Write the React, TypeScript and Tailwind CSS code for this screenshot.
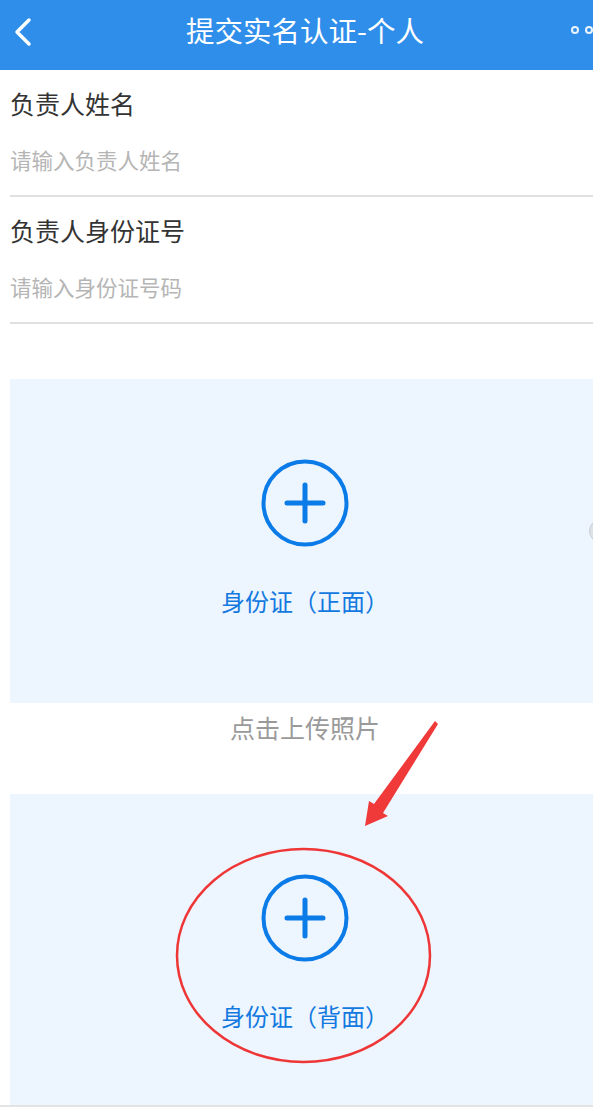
import React from "react";

const FONT = { fontFamily: '"Noto Sans CJK SC", "Noto Sans", sans-serif' };

function PlusCircle() {
  return (
    <svg width="92" height="92" viewBox="0 0 92 92" fill="none">
      <circle cx="46" cy="46" r="41.5" stroke="#0b7be8" strokeWidth="4" />
      <path d="M28 46h36M46 28v36" stroke="#0b7be8" strokeWidth="5" strokeLinecap="round" />
    </svg>
  );
}

function Field({ label, placeholder }: { label: string; placeholder: string }) {
  return (
    <div className="pt-[18px] pb-[21px] border-b-2 border-[#e0e0e0]">
      <div className="text-[25px] leading-[30px] text-[#333]">{label}</div>
      <div className="mt-[28px] text-[21.5px] leading-[28px] text-[#b5b5b5]">{placeholder}</div>
    </div>
  );
}

function UploadBox({ label, className = "" }: { label: string; className?: string }) {
  return (
    <div className={`ml-[10px] w-[590px] bg-[#edf5fe] flex flex-col items-center ${className}`}>
      <div className="mt-[78px]">
        <PlusCircle />
      </div>
      <div className="mt-[37px] text-[24px] leading-[30px] text-[#1279e0]">{label}</div>
    </div>
  );
}

export default function App() {
  return (
    <div className="relative w-[593px] h-[1107px] overflow-hidden bg-white" style={FONT}>
      <div className="w-[610px]">
        {/* Header */}
        <div className="relative h-[70px] bg-[#2f8eea] flex items-center justify-center">
          <svg className="absolute left-[12px] top-[17px]" width="24" height="30" viewBox="0 0 24 30" fill="none">
            <path d="M17 3L5 15l12 12" stroke="white" strokeWidth="3.5" strokeLinecap="round" strokeLinejoin="round" />
          </svg>
          <div className="text-[28.5px] leading-[36px] text-white -mt-[10px]">提交实名认证-个人</div>
          <div className="absolute left-[571px] top-[26px] flex gap-[6px]">
            <span className="w-[8px] h-[8px] rounded-full border-2 border-white/90" />
            <span className="w-[8px] h-[8px] rounded-full border-2 border-white/90" />
          </div>
        </div>

        {/* Fields */}
        <div className="pl-[10px]">
          <Field label="负责人姓名" placeholder="请输入负责人姓名" />
          <Field label="负责人身份证号" placeholder="请输入身份证号码" />
        </div>

        <UploadBox label="身份证（正面）" className="mt-[55px] h-[324px]" />

        <div className="h-[91px] flex items-start justify-center">
          <div className="mt-[8px] text-[25px] leading-[32px] text-[#9a9a9a]">点击上传照片</div>
        </div>

        <UploadBox label="身份证（背面）" className="h-[311px]" />
        <div className="h-[2px] bg-[#e3e3e3]" />
      </div>

      {/* floating handle at right edge */}
      <div className="absolute left-[589px] top-[519px] w-[24px] h-[24px] rounded-full bg-[#dde2e7] border border-[#c9ced4]" />

      {/* red annotation */}
      <svg className="absolute left-0 top-0 pointer-events-none" width="593" height="1107" viewBox="0 0 593 1107" fill="none">
        <ellipse cx="303.5" cy="955.5" rx="126.5" ry="106.5" stroke="#ee3636" strokeWidth="2.5" />
        <path d="M438 724L383 813l5 3-23 10 4-25 5 3 61-83z" fill="#f03a3a" />
      </svg>
    </div>
  );
}
